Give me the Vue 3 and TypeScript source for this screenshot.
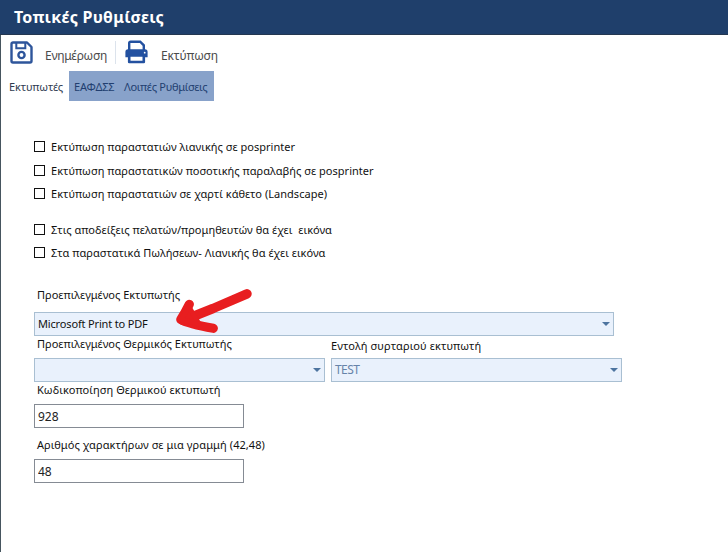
<script setup lang="ts">
import { reactive, ref } from 'vue'

interface Option {
  text: string
  cls: string
  checked: boolean
}

const tabs = ['Εκτυπωτές', 'ΕΑΦΔΣΣ', 'Λοιπές Ρυθμίσεις']
const activeTab = ref(0)

const options = reactive<Option[]>([
  { text: 'Εκτύπωση παραστατιών λιανικής σε posprinter', cls: 'o1', checked: false },
  { text: 'Εκτύπωση παραστατικών ποσοτικής παραλαβής σε posprinter', cls: 'o2', checked: false },
  { text: 'Εκτύπωση παραστατιών σε χαρτί κάθετο (Landscape)', cls: 'o3', checked: false },
  { text: 'Στις αποδείξεις πελατών/προμηθευτών θα έχει  εικόνα', cls: 'o4', checked: false },
  { text: 'Στα παραστατικά Πωλήσεων- Λιανικής θα έχει εικόνα', cls: 'o5', checked: false },
])

const encoding = ref('928')
const lineChars = ref('48')
</script>

<template>
  <div class="window">
    <header class="title"><span>Τοπικές Ρυθμίσεις</span></header>

    <div class="toolbar">
      <button class="tool save">
        <svg width="23" height="23" viewBox="0 0 23 23" fill="none" stroke="#2e559b" stroke-width="2.4">
          <path d="M3 1.5H17L21.5 6V20a1.5 1.5 0 0 1-1.5 1.5H3A1.5 1.5 0 0 1 1.5 20V3A1.5 1.5 0 0 1 3 1.5Z" stroke-linejoin="round" />
          <path d="M6.3 2V7.3H15.3V2" stroke-width="2" />
          <circle cx="11.5" cy="14" r="3.1" />
        </svg>
        <span>Ενημέρωση</span>
      </button>
      <i class="divider"></i>
      <button class="tool print">
        <svg width="23" height="24" viewBox="0 0 23 24">
          <path d="M4.2 10V3a1.3 1.3 0 0 1 1.3-1.3H15.2L18.8 5.3V10" fill="none" stroke="#2351a0" stroke-width="2.4" />
          <path d="M3 9.3H20a2.6 2.6 0 0 1 2.6 2.6V17.3H.4V11.9A2.6 2.6 0 0 1 3 9.3Z" fill="#2351a0" />
          <path d="M4.2 15.5H18.8V22H4.2Z" fill="#fff" stroke="#2351a0" stroke-width="2.6" stroke-linejoin="round" />
          <circle cx="19.7" cy="12.7" r="0.9" fill="#fff" />
        </svg>
        <span>Εκτύπωση</span>
      </button>
    </div>

    <nav class="tabs">
      <button
        v-for="(tab, i) in tabs"
        :key="tab"
        :class="['tab', 't' + i, { active: activeTab === i }]"
        @click="activeTab = i"
      >{{ tab }}</button>
    </nav>

    <main class="content">
      <div class="options">
        <label v-for="o in options" :key="o.cls" :class="['option', o.cls]">
          <input v-model="o.checked" type="checkbox" />
          <span>{{ o.text }}</span>
        </label>
      </div>

      <div class="field main-printer">
        <div class="label l1">Προεπιλεγμένος Εκτυπωτής</div>
        <div class="select"><span class="v1">Microsoft Print to PDF</span><i class="caret"></i></div>
        <svg class="arrow" width="80" height="50" viewBox="0 0 80 50" fill="none" stroke="#e81e20" stroke-linecap="round" stroke-linejoin="round">
          <path d="M72 6.8L38 21.5L8 33.5" stroke-width="9.5" />
          <path d="M14.3 17.3Q10 26 5.8 32.5Q14 37 38.3 41.3" stroke-width="9.2" />
          <path d="M14 20L6 32.5L24 37Z" fill="#e81e20" stroke-width="5" />
        </svg>
      </div>

      <div class="pair">
        <div class="field">
          <div class="label l2">Προεπιλεγμένος Θερμικός Εκτυπωτής</div>
          <div class="select"><span></span><i class="caret"></i></div>
        </div>
        <div class="field">
          <div class="label l3">Εντολή συρταριού εκτυπωτή</div>
          <div class="select muted"><span class="v2">TEST</span><i class="caret"></i></div>
        </div>
      </div>

      <div class="field code">
        <div class="label l4">Κωδικοποίηση Θερμικού εκτυπωτή</div>
        <input v-model="encoding" class="text" type="text" />
      </div>
      <div class="field chars">
        <div class="label l5">Αριθμός χαρακτήρων σε μια γραμμή (42,48)</div>
        <input v-model="lineChars" class="text" type="text" />
      </div>
    </main>
  </div>
</template>

<style>
body {
  background: #fff;
  overflow: hidden;
}
</style>

<style scoped>
.window {
  box-sizing: border-box;
  height: 552px;
  border-left: 1px solid #46555f;
  background: #fff;
  color: #111;
  font: 11px/16px "Noto Sans", "Open Sans", sans-serif;
}
button {
  border: 0;
  padding: 0;
  background: none;
  font: inherit;
  color: inherit;
}
.title {
  box-sizing: border-box;
  height: 35px;
  margin-left: -1px;
  padding: 6px 14px;
  border-bottom: 1px solid #243750;
  background: #1f3f6b;
  color: #fff;
  font-size: 16px;
  font-weight: 700;
  line-height: 22px;
  letter-spacing: 0.25px;
}
.toolbar {
  display: flex;
  height: 36px;
  font-size: 12px;
  color: #4b4b4b;
}
.tool {
  display: flex;
  align-items: flex-start;
}
.save {
  width: 114px;
  padding: 6px 0 0 9px;
  gap: 12px;
}
.print {
  padding: 5px 0 0 9px;
  gap: 13px;
}
.save span {
  margin-top: 7px;
  letter-spacing: -0.28px;
}
.print span {
  margin-top: 8px;
  letter-spacing: -0.12px;
}
.divider {
  width: 1px;
  height: 23px;
  margin-top: 6px;
  background: #dce3ec;
}
.tabs {
  display: flex;
  height: 30px;
}
.tab {
  height: 30px;
  padding-top: 2px;
  background: #88a2ca;
  color: #223f70;
  text-align: left;
  white-space: nowrap;
}
.tab.active {
  background: #fff;
  color: #2f3b50;
}
.t0 { width: 68px; padding-left: 8px; letter-spacing: -0.12px; }
.t1 { width: 50px; padding-left: 5px; letter-spacing: -0.2px; }
.t2 { width: 95px; padding-left: 5px; letter-spacing: -0.28px; }
.content {
  padding: 37px 0 0 33px;
}
.options {
  display: flex;
  flex-direction: column;
  gap: 7px;
}
.option {
  display: flex;
  align-items: center;
  height: 16px;
  gap: 6px;
  white-space: pre;
  letter-spacing: 0.03px;
}
.option span { padding-top: 2px; }
.o2 { margin-top: 1px; }
.o4 { margin-top: 13px; }
.option input {
  appearance: none;
  box-sizing: border-box;
  width: 11px;
  height: 11px;
  margin: 0;
  border: 1px solid #111;
  background: #fff;
}
.option input:checked {
  background: #1f3f6b;
}
.field {
  position: relative;
}
.label {
  padding-left: 3px;
  white-space: nowrap;
}
.select {
  box-sizing: border-box;
  display: flex;
  align-items: center;
  justify-content: space-between;
  height: 24px;
  padding: 0 3px;
  border: 1px solid #a9bfd2;
  background: #e9f1fc;
}
.muted { color: #6683a9; }
.v1 { letter-spacing: -0.16px; }
.v2 { font-size: 12px; letter-spacing: -0.6px; }
.l3 { letter-spacing: 0.12px; }
.l4 { letter-spacing: 0.05px; }
.l5 { letter-spacing: 0.07px; }
.caret {
  border: 4px solid transparent;
  border-top: 4px solid #4d749f;
  border-bottom: 0;
}
.main-printer {
  width: 580px;
  margin-top: 27px;
}
.main-printer .label { margin-bottom: 9px; }
.arrow {
  position: absolute;
  left: 141px;
  top: 0;
}
.pair {
  display: grid;
  grid-template-columns: 291px 291px;
  gap: 6px;
}
.pair .label { padding-bottom: 6px; }
.pair .l3 { padding: 2px 0 4px; }
.code .label { padding-bottom: 6px; }
.chars { margin-top: 9px; }
.chars .label { padding-bottom: 6px; }
.text {
  box-sizing: border-box;
  display: block;
  width: 210px;
  height: 24px;
  padding: 0 3px;
  border: 1px solid #858b94;
  outline: 0;
  background: #fff;
  color: #222;
  font: 12px/16px "Noto Sans", "Open Sans", sans-serif;
}
</style>
